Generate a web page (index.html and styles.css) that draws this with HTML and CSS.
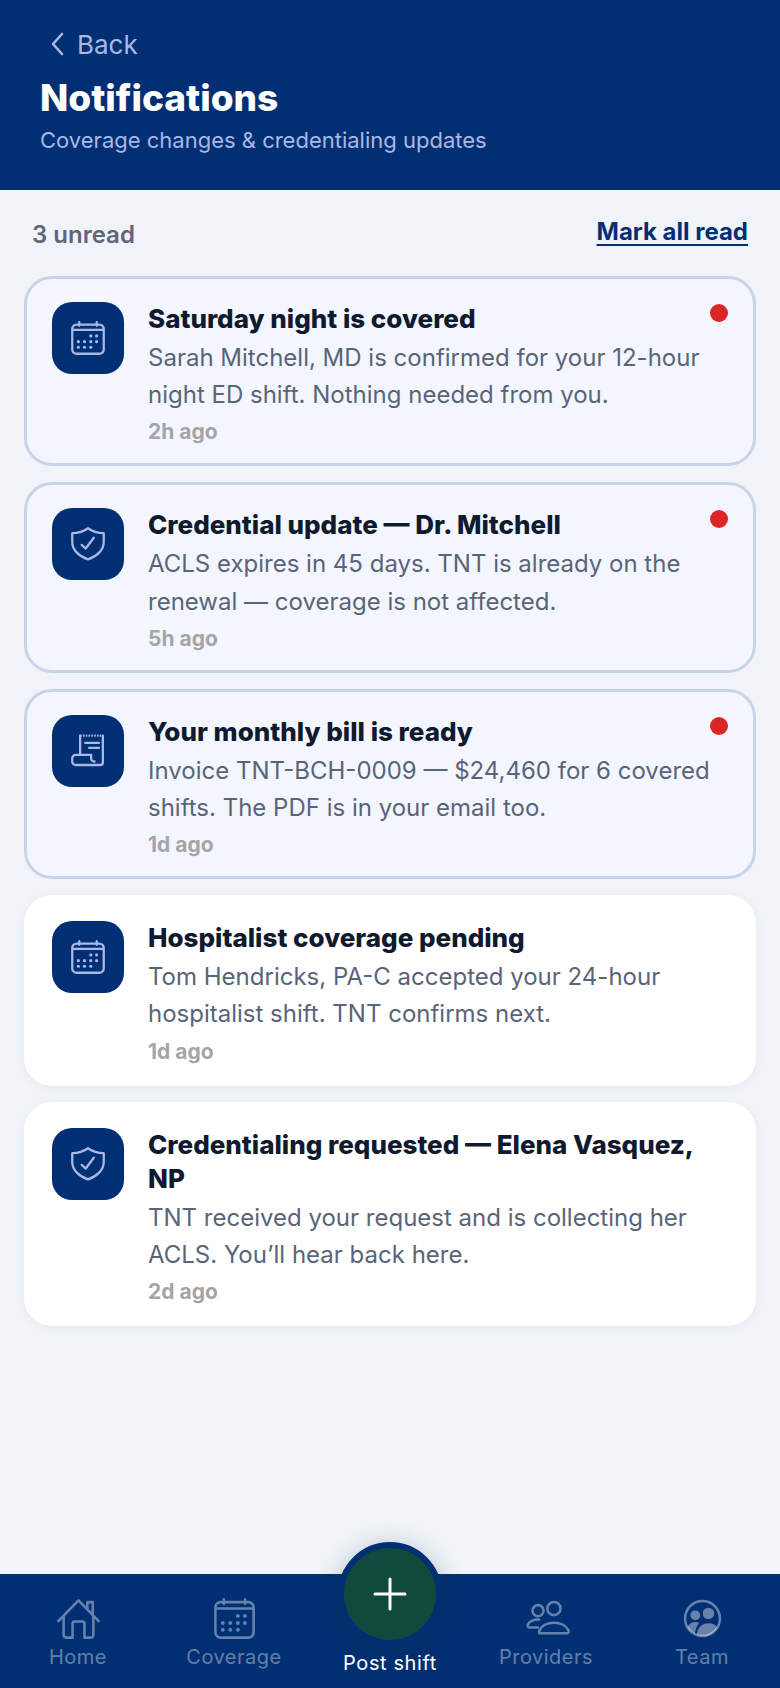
FILE: index.html
```html
<!DOCTYPE html>
<html lang="en">

<head>
    <meta charset="UTF-8">
    <meta name="viewport" content="width=device-width, initial-scale=1.0">
    <title>Notifications</title>
    <link rel="stylesheet" href="styles.css">
</head>

<body>
    <svg class="sprite" width="0" height="0">
        <symbol id="i-calendar" viewBox="0 0 24 24">
            <path d="M7 3v2M17 3v2M5.500 4.300h13A2.500 2.500 0 0 1 21 6.800v11.700a2.500 2.500 0 0 1-2.500 2.500h-13A2.500 2.500 0 0 1 3 18.500V6.800a2.500 2.500 0 0 1 2.500-2.500ZM3 7.300h18" fill="none" stroke="currentColor" stroke-linecap="round" stroke-linejoin="round"/>
            <g fill="currentColor">
                <circle cx="13.600" cy="10.800" r=".9"/><circle cx="16.900" cy="10.800" r=".9"/>
                <circle cx="6.500" cy="14.100" r=".9"/><circle cx="10" cy="14.100" r=".9"/><circle cx="13.600" cy="14.100" r=".9"/><circle cx="16.900" cy="14.100" r=".9"/>
                <circle cx="6.500" cy="17.300" r=".9"/><circle cx="10" cy="17.300" r=".9"/><circle cx="13.600" cy="17.300" r=".9"/>
            </g>
        </symbol>
        <symbol id="i-shield" viewBox="0 0 24 24">
            <path d="M12 3C14.500 4.900 17.700 5.800 21 5.800V11C21 15.500 17 19 12 20.800 7 19 3 15.500 3 11V5.800C6.300 5.800 9.500 4.900 12 3ZM8.400 12.500l2.300 2.100 4.600-6.200" fill="none" stroke="currentColor" stroke-linecap="round" stroke-linejoin="round"/>
        </symbol>
        <symbol id="i-scroll" viewBox="0 0 24 24">
            <path d="M7.500 14.200V3.200M20.500 3.200v15.300a1.500 1.500 0 0 1-1.500 1.500H5a2 2 0 0 1-2-2v-1.800a2 2 0 0 1 2-2h8.800v1.900c0 1.300.8 2 2 1.900M10.400 7.300h7.900M12.600 10.200h5.700" fill="none" stroke="currentColor" stroke-linecap="round" stroke-linejoin="round"/>
            <path d="M7.500 3.200h13" fill="none" stroke="currentColor" stroke-dasharray=".9 .7"/>
        </symbol>
        <symbol id="i-house" viewBox="0 0 24 24">
            <path d="M2.500 13.200 12 3.500l9.500 9.700M5 11v8.800A1.200 1.200 0 0 0 6.200 21h3v-6.600a1 1 0 0 1 1-1h3.600a1 1 0 0 1 1 1V21h3a1.200 1.200 0 0 0 1.200-1.200V11M16.200 7.600V4.300h2.500v5.900" fill="none" stroke="currentColor" stroke-linecap="round" stroke-linejoin="round"/>
        </symbol>
        <symbol id="i-users" viewBox="0 0 24 24">
            <circle cx="8" cy="8.300" r="2.600" fill="none" stroke="currentColor"/>
            <circle cx="15.500" cy="7.300" r="3.100" fill="none" stroke="currentColor"/>
            <path d="M8 16.200H4a.9.9 0 0 1-.8-1.300C4 13.300 5.800 12.500 8.500 12.500M8.500 18.900h13.200c.6 0 1-.6.7-1.200-1-2.200-3.700-3.700-6.900-3.700s-5.900 1.500-6.900 3.700c-.3.600.2 1.200.9 1.200Z" fill="none" stroke="currentColor" stroke-linecap="round" stroke-linejoin="round"/>
        </symbol>
        <symbol id="i-team" viewBox="0 0 24 24">
            <circle cx="12" cy="12" r="8.200" fill="none" stroke="currentColor"/>
            <g fill="currentColor">
                <circle cx="8.600" cy="10.500" r="2.300"/>
                <circle cx="14.800" cy="9.600" r="2.700"/>
                <path d="M4.900 16.200c.6-1.600 2-2.500 3.700-2.500.7 0 1.300.2 1.900.4-1 .9-1.700 2.400-2.100 5a8.200 8.200 0 0 1-3.500-2.900ZM9.300 19.700c.3-3.500 2.500-5.500 5.500-5.500 1.900 0 3.400.7 4.200 2A8.200 8.200 0 0 1 12 20.200a8.200 8.200 0 0 1-2.700-.5Z"/>
            </g>
        </symbol>
    </svg>

    <div class="page">
        <header class="top">
            <a class="back" href="#">
                <svg class="chevron" viewBox="0 0 14 24"><path d="M12 2 3 12l9 10"/></svg>
                Back
            </a>
            <h1>Notifications</h1>
            <p>Coverage changes &amp; credentialing updates</p>
        </header>

        <main class="content">
            <div class="summary">
                <span class="count">3 unread</span>
                <a class="mark-read" href="#">Mark all read</a>
            </div>

            <div class="list">
                <article class="card unread">
                    <div class="icon-box"><svg class="icon"><use href="#i-calendar"/></svg></div>
                    <div class="body">
                        <h2>Saturday night is covered</h2>
                        <p>Sarah Mitchell, MD is confirmed for your 12-hour night ED shift. Nothing needed from you.</p>
                        <time>2h ago</time>
                    </div>
                    <span class="dot"></span>
                </article>

                <article class="card unread">
                    <div class="icon-box"><svg class="icon"><use href="#i-shield"/></svg></div>
                    <div class="body">
                        <h2>Credential update — Dr. Mitchell</h2>
                        <p>ACLS expires in 45 days. TNT is already on the renewal — coverage is not affected.</p>
                        <time>5h ago</time>
                    </div>
                    <span class="dot"></span>
                </article>

                <article class="card unread">
                    <div class="icon-box"><svg class="icon"><use href="#i-scroll"/></svg></div>
                    <div class="body">
                        <h2>Your monthly bill is ready</h2>
                        <p>Invoice TNT-BCH-0009 — $24,460 for 6 covered shifts. The PDF is in your email too.</p>
                        <time>1d ago</time>
                    </div>
                    <span class="dot"></span>
                </article>

                <article class="card">
                    <div class="icon-box"><svg class="icon"><use href="#i-calendar"/></svg></div>
                    <div class="body">
                        <h2>Hospitalist coverage pending</h2>
                        <p>Tom Hendricks, PA-C accepted your 24-hour hospitalist shift. TNT confirms next.</p>
                        <time>1d ago</time>
                    </div>
                </article>

                <article class="card">
                    <div class="icon-box"><svg class="icon"><use href="#i-shield"/></svg></div>
                    <div class="body">
                        <h2>Credentialing requested — Elena Vasquez, NP</h2>
                        <p>TNT received your request and is collecting her ACLS. You’ll hear back here.</p>
                        <time>2d ago</time>
                    </div>
                </article>
            </div>
        </main>

        <nav class="tabs">
            <a class="tab" href="#"><svg class="tab-icon"><use href="#i-house"/></svg>Home</a>
            <a class="tab" href="#"><svg class="tab-icon"><use href="#i-calendar"/></svg>Coverage</a>
            <a class="tab tab-post" href="#">
                <span class="fab"><svg viewBox="0 0 36 36"><path d="M18 3v30M3 18h30"/></svg></span>
                Post shift
            </a>
            <a class="tab" href="#"><svg class="tab-icon"><use href="#i-users"/></svg>Providers</a>
            <a class="tab" href="#"><svg class="tab-icon"><use href="#i-team"/></svg>Team</a>
        </nav>
    </div>
</body>

</html>
```

FILE: styles.css
```css
* {
    box-sizing: border-box;
}

body {
    margin: 0;
    font-family: Inter, "Noto Sans", sans-serif;
    background: #f0f4f9;
}

a {
    text-decoration: none;
}

.sprite {
    display: none;
}

.page {
    display: flex;
    flex-direction: column;
    min-height: 1688px;
}

.top {
    height: 190px;
    background: #002f73;
    padding: 27px 40px 0;
}

.back {
    display: flex;
    align-items: center;
    gap: 13px;
    height: 34px;
    margin-left: 10px;
    color: #a9b8e6;
    font-size: 26px;
}

.chevron {
    width: 14px;
    height: 24px;
    fill: none;
    stroke: #a9b8e6;
    stroke-width: 2.6;
    stroke-linecap: round;
    stroke-linejoin: round;
}

.top h1 {
    margin: 15px 0 0;
    color: #fff;
    font-size: 37px;
    line-height: 44px;
    font-weight: 800;
}

.top p {
    margin: 6px 0 0;
    color: #a9b8e6;
    font-size: 22px;
    line-height: 28px;
}

.content {
    flex: 1;
    padding: 0 24px;
}

.summary {
    display: flex;
    justify-content: space-between;
    align-items: center;
    height: 86px;
    padding: 0 8px;
}

.count {
    margin-top: 2px;
    color: #5f667a;
    font-size: 24px;
    font-weight: 600;
}

.mark-read {
    margin-top: -3px;
    color: #002f73;
    font-size: 24px;
    font-weight: 700;
    text-decoration: underline;
    text-underline-offset: 4px;
}

.list {
    display: flex;
    flex-direction: column;
    gap: 16px;
}

.card {
    position: relative;
    display: flex;
    gap: 24px;
    padding: 26px 28px 21px;
    background: #fff;
    border-radius: 28px;
    box-shadow: 0 2px 10px rgba(0, 47, 115, 0.05);
}

.card.unread {
    padding: 23px 25px 18px;
    background: #f3f6fe;
    border: 3px solid #c8d3ea;
    box-shadow: none;
}

.icon-box {
    display: flex;
    align-items: center;
    justify-content: center;
    flex: 0 0 72px;
    height: 72px;
    background: #002f73;
    border-radius: 20px;
}

.icon {
    width: 42px;
    height: 42px;
    color: #a9b8e6;
    stroke-width: 1.3;
}

.body {
    flex: 1;
    min-width: 0;
}

.body h2 {
    margin: 0;
    color: #0f1a2e;
    font-size: 26px;
    line-height: 34px;
    font-weight: 800;
}

.body p {
    margin: 3px 0 0;
    color: #5a6478;
    font-size: 24px;
    line-height: 1.55;
}

.body time {
    display: block;
    margin-top: 6px;
    color: #a5a5a5;
    font-size: 21px;
    line-height: 26px;
    font-weight: 700;
}

.dot {
    position: absolute;
    top: 25px;
    right: 25px;
    width: 18px;
    height: 18px;
    background: #dc2626;
    border-radius: 50%;
}

.tabs {
    display: flex;
    height: 114px;
    background: #002f73;
}

.tab {
    display: flex;
    flex-direction: column;
    align-items: center;
    flex: 1;
    padding-top: 19px;
    color: rgba(255, 255, 255, 0.4);
    font-size: 20px;
    letter-spacing: 0.5px;
}

.tab-icon {
    width: 51px;
    height: 51px;
    margin-bottom: 1px;
    stroke-width: 1.2;
}

.tab-post {
    padding-top: 0;
    color: #fff;
    letter-spacing: 0.6px;
}

.fab {
    display: flex;
    align-items: center;
    justify-content: center;
    width: 104px;
    height: 104px;
    margin: -32px 0 5px;
    background: #0f4a3c;
    border: 6px solid #002f73;
    border-radius: 50%;
    box-shadow: 0 4px 24px rgba(15, 60, 60, 0.3);
}

.fab svg {
    width: 36px;
    height: 36px;
    fill: none;
    stroke: #fff;
    stroke-width: 3;
    stroke-linecap: round;
}
```
